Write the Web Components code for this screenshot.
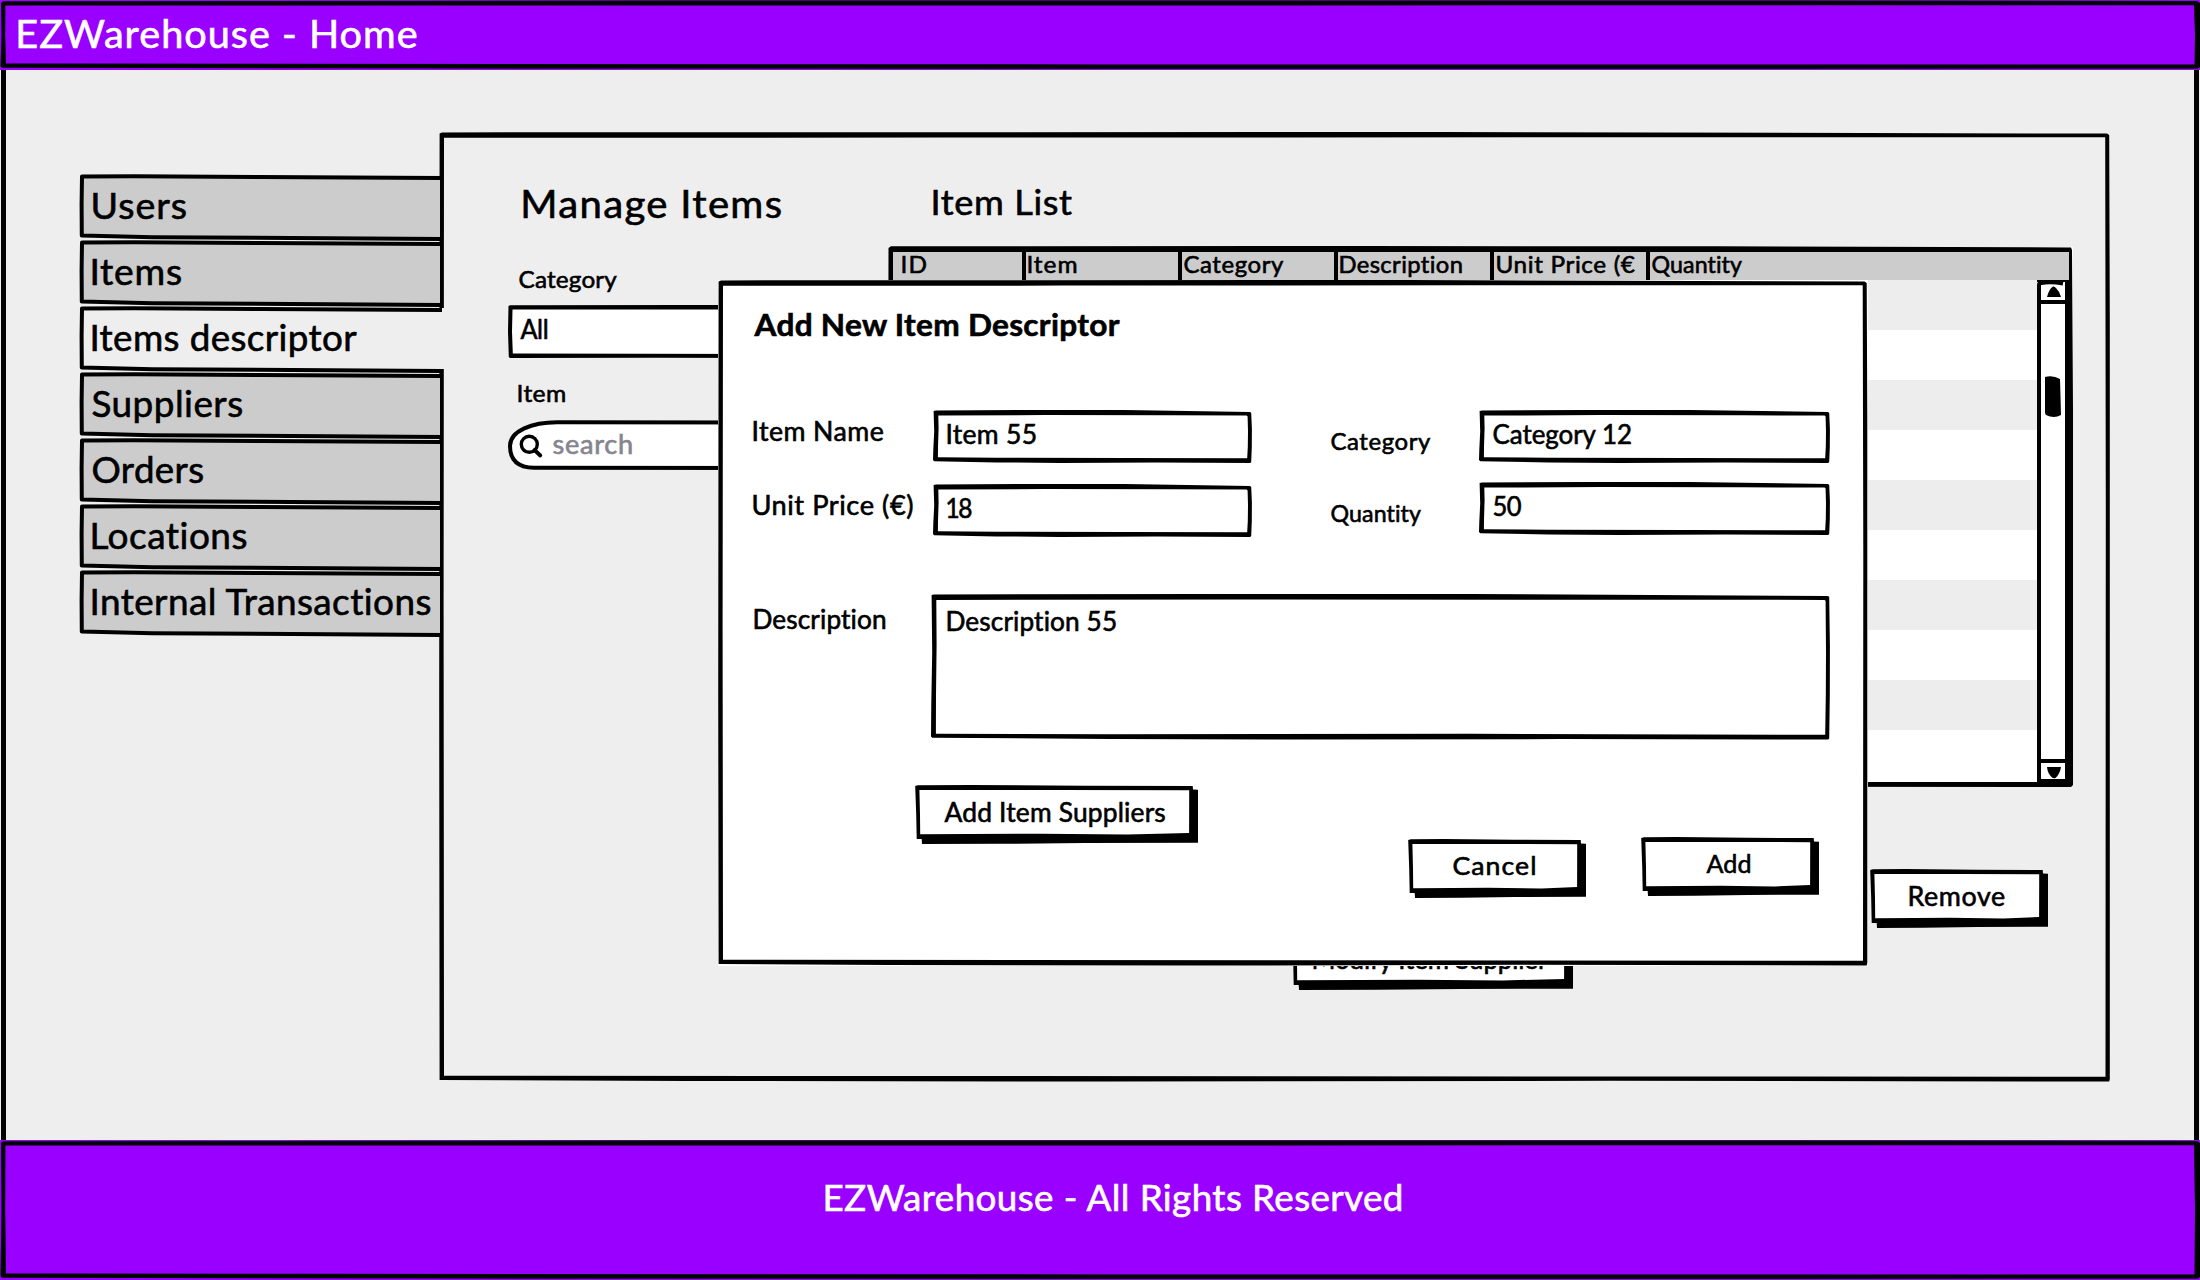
<!DOCTYPE html>
<html lang="en">
<head>
<meta charset="utf-8">
<title>EZWarehouse - Home</title>
<style>
  body { margin: 0; background: #eee; color: #000; font-family: Lato, "Open Sans", sans-serif; }
</style>
</head>
<body>
<ez-app></ez-app>
<script>
const pts = a => 'M' + a.map(p => p.map(n => n.toFixed(1)).join(' ')).join('L') + 'Z';

// Base class: a box with a hand-drawn outline behind its slotted content.
class Sketch extends HTMLElement {
  constructor() {
    super();
    this.attachShadow({ mode: 'open' }).innerHTML = `<style>
      :host{display:block;position:relative;box-sizing:border-box;flex:none}
      svg{position:absolute;left:0;top:0;width:100%;height:100%;overflow:visible;pointer-events:none}
      .in{position:relative;box-sizing:border-box;width:100%;height:100%}
      ${this.css || ''}</style><svg aria-hidden="true"></svg><div class="in"><slot></slot></div>`;
  }
  connectedCallback() {
    const r = this.getBoundingClientRect();
    this.shadowRoot.querySelector('svg').innerHTML = this.draw(r.width, r.height);
  }
}

// Single line of text whose ink is exactly "w" pixels wide: half of the
// difference to the natural width goes to tracking, the rest to glyph width.
customElements.define('ez-text', class extends HTMLElement {
  connectedCallback() {
    if (this.shadowRoot) return;
    const s = +this.getAttribute('s'), w = +this.getAttribute('w'), b = this.hasAttribute('bold');
    const t = this.textContent;
    const c = document.createElement('canvas').getContext('2d');
    c.font = `${b ? 'bold ' : ''}${s}px Lato`;
    const m = c.measureText(t);
    const left = m.actualBoundingBoxLeft, ink = left + m.actualBoundingBoxRight;
    const mid = (w + ink) / 2;
    const ls = (mid - ink) / (t.length - 1), k = w / mid;
    this.attachShadow({ mode: 'open' }).innerHTML = `<style>
      :host{display:block;flex:none;white-space:nowrap;width:${w}px;font-size:${s}px;line-height:${s + Math.round(s * .213)}px;
        font-weight:${b ? 700 : 400};font-variant-ligatures:none;letter-spacing:${ls.toFixed(3)}px;
        -webkit-text-stroke:.6px currentColor;paint-order:stroke}
      span{display:block;transform-origin:0 0;transform:translate(${(left * k + .5).toFixed(2)}px,.8px) scaleX(${k.toFixed(4)})}
      </style><span><slot></slot></span>`;
  }
});

customElements.define('ez-field', class extends Sketch {
  get css() { return `:host{height:53px}.in{padding:7px 0 0 14px}:host([area]) .in{padding:10px 0 0 16.5px}:host([plain]) .in{padding-left:12px}`; }
  draw(w, h) {
    if (this.hasAttribute('plain')) return `<path fill="#fff" d="${pts([[1,1],[w,0],[w,h],[1,h]])}"/>
      <path fill-rule="evenodd" d="${pts([[.5,1],[2,.3],[w*.6,0],[w,0],[w,h],[w*.5,h-.3],[2,h],[.8,h-1],[0,h*.5]])}${pts([[4.5,4.5],[w,4.5],[w,h-4],[4.8,h-4.5],[4,h*.5]])}"/>`;
    const a = this.hasAttribute('area');
    const o = [[.6,1],[3,.4],[w*.3,0],[w*.6,0],[w-2,1.9],[w-.8,3],[w-.1,h*.35],[w-.2,h*.7],[w-.8,h-1],[w-1.8,h+.1],[w*.7,h-.4],[w*.4,h],[w*.2,h-.6],[1.2,h-1.8],[0,h-3],[.3,h*.75],[1.2,h*.4]];
    const t = a ? 5.7 : 5.3;
    const i = [[5.3,t+.3],[w*.35,t-.2],[w*.75,t],[w-5.4,t+.2],[w-4.4,t+1.2],[w-4,h*.4],[w-4.2,h*.7],[w-4.8,h-4.7],[w*.6,h-(a?5.7:4.9)],[w*.2,h-5.2],[4.9,h-5.8],[5,h*.7],[5.6,h*.35]];
    return `<path fill="#fff" d="${pts(o)}"/><path fill-rule="evenodd" d="${pts(o)}${pts(i)}"/>`;
  }
});

customElements.define('ez-search', class extends Sketch {
  get css() { return `:host{height:50px;color:#868490}.in{padding:6.5px 0 0 44px}`; }
  draw(w, h) {
    return `<path d="M${w} 2.5L50 2.2C24 2 2 11 2 26C2 40 10 47.5 26 47.8L${w} 48" fill="#fff" stroke="#000" stroke-width="4"/>
      <circle cx="21.3" cy="24.3" r="8" fill="none" stroke="#000" stroke-width="3.4"/>
      <path d="M26.5 30L32.3 35.5" stroke="#000" stroke-width="3.8" stroke-linecap="round"/>`;
  }
});

customElements.define('ez-button', class extends Sketch {
  get css() { return `:host{height:59px}.in{padding:10.5px 5px 0 0;display:flex;justify-content:center}`; }
  draw(w, h) {
    return `<path d="${pts([[.2,1],[3,.2],[w*.2,0],[w*.6,.8],[w-5.3,1],[w-5,4.6],[w,4.8],[w,h-1.3],[w*.6,h-1],[w*.3,h-.2],[7,h],[6.7,h-5],[1.7,h-5],[1.2,h*.5]])}"/>
      <path fill="#fff" d="${pts([[4.4,5],[w*.5,4.9],[w-8.8,5.2],[w-8.9,h-11],[w*.75,h-9.6],[w*.45,h-10.3],[5.2,h-9.8],[5,h*.5]])}"/>`;
  }
});

customElements.define('ez-tab', class extends Sketch {
  get css() { return `:host{height:66px}.in{padding:8px 0 0 11.5px}`; }
  draw(w, h) {
    const on = this.hasAttribute('selected'), f = on ? '#eee' : '#ccc';
    return (on ? `<path fill="#eee" d="M${w-6} 2H${w+4}V63H${w-6}Z"/>` : '') +
      `<path fill="${f}" d="${pts([[2,2],[w-2,4],[w-2,64],[2,62]])}"/>
      <path fill="none" stroke="#000" stroke-width="4" stroke-linejoin="round" d="M${w} 4L${w*.5} 3L${w*.15} 2.3L2 2.6L1.6 30L1.8 61.5L${w*.2} 63.2L${w} 65"/>`;
  }
});

customElements.define('ez-panel', class extends Sketch {
  draw(w, h) {
    return `<path fill="${this.getAttribute('fill')}" d="M0 0H${w}V${h}H0Z"/>
      <path fill-rule="evenodd" d="${pts([[.6,1.5],[3,.4],[w*.25,.2],[w*.6,0],[w-3,1.6],[w-.8,3],[w-.2,h*.2],[w-.2,h-3],[w-.8,h-.5],[w*.7,h-1.2],[w*.4,h-.4],[w*.15,h-1],[.6,h-2],[.2,h*.6]])}${pts([[5,5.8],[w*.3,5.6],[w*.65,5.3],[w-4.8,5.2],[w-4.2,h*.4],[w-4.5,h-5.2],[w*.5,h-5.8],[5,h-6.3],[4.6,h*.5]])}"/>`;
  }
});

// Header and footer bars
customElements.define('ez-bar', class extends Sketch {
  get css() { return `:host{color:#fff}.in{display:flex;align-items:flex-start}
    :host([top]) .in{padding:9px 0 0 18px}:host([foot]) .in{padding:34px 0 0 825px}`; }
  draw(w, h) {
    return `<path fill="#90f" d="M0 0H${w}V${h}H0Z"/>
      <path fill-rule="evenodd" d="${pts([[1,3],[3,1.2],[w*.3,.6],[w*.7,.4],[w-3,1],[w,3],[w,h-3],[w-2,h-1.2],[w*.5,h-1],[w*.2,h-1.4],[2,h-2.2],[.5,h-4],[1.5,h*.5]])}${pts([[5.4,5.6],[w*.4,5.5],[w-6,5.2],[w-5,h*.5],[w-5.5,h-5.6],[w*.5,h-5.6],[6,h-6.4],[5.2,h*.5]])}"/>`;
  }
});

customElements.define('ez-scrollbar', class extends HTMLElement {
  connectedCallback() {
    this.attachShadow({ mode: 'open' }).innerHTML = `<style>:host{display:block;width:28px;height:502px;flex:none}svg{display:block}</style>
    <svg width="28" height="502" viewBox="0 0 28 502"><path fill="#fff" d="M0 2H28V502H0Z"/>
      <path d="M2 502V5Q2 3 4 3Q14 1.5 26 3.5" fill="none" stroke="#000" stroke-width="4"/>
      <path d="M2 22H28M2 481H28M2 501H28" stroke="#000" stroke-width="4"/>
      <path d="M10 17Q12 9 16 6.5Q17.500 6 19 8Q23 12 24 17Z"/>
      <path d="M10 487H24Q23 494 18.500 498Q16.500 499 14.500 497Q10.500 493 10 487Z"/>
      <path d="M8 97Q16 95 23 99L24 135Q17 139 9 135Q8 134 8 132Z"/></svg>`;
  }
});

customElements.define('ez-table', class extends Sketch {
  constructor() {
    super();
    this.shadowRoot.querySelector('.in').innerHTML = `
      <div class="head"><div style="width:129px;padding-left:9px"><ez-text s="23" w="24">ID</ez-text></div>
        <div><ez-text s="23" w="48">Item</ez-text></div>
        <div><ez-text s="23" w="99">Category</ez-text></div>
        <div><ez-text s="23" w="122">Description</ez-text></div>
        <div><ez-text s="23" w="138">Unit Price (€</ez-text></div>
        <div style="flex:1"><ez-text s="23" w="90">Quantity</ez-text></div></div>
      <div class="body"><div class="rows">${'<i></i>'.repeat(10)}</div><ez-scrollbar></ez-scrollbar></div>`;
  }
  get css() { return `:host{width:1185px;height:541px}
    .in{padding:5.500px 8px 5px 4.500px;display:flex;flex-direction:column}
    .head{display:flex;height:28.500px;flex:none;background:#ccc;margin-right:-4px}
    .head div{box-sizing:border-box;width:156px;border-left:4px solid #000;padding-left:2.500px}
    .head div:first-child{border:0}.head ez-text{margin-top:-3px}
    .body{display:flex;flex:1;min-height:0}.rows{flex:1;display:flex;flex-direction:column;background:#fff}
    i{height:50px;flex:none;background:#fff}i:nth-child(odd){background:#ededed}`; }
  draw(w, h) {
    return `<path fill="#fff" d="M2 1H${w}V${h-2}H2Z"/><path d="${pts([[.5,2],[3,.2],[w*.4,0],[w*.7,.3],[w-2,1.5],[w-1,4],[w,h*.3],[w,h-2],[w-2,h],[w*.5,h-.5],[1,h-1],[0,h*.5]])}"/>`;
  }
});

customElements.define('ez-dialog', class extends HTMLElement {
  connectedCallback() {
    this.attachShadow({ mode: 'open' }).innerHTML = `<style>
      :host{display:block;width:1149.500px;height:686px;background:#fff}
      ez-panel{width:100%;height:100%}
      .c{display:flex;flex-direction:column;padding:24px 0 0 35px}
      .row{display:flex;align-items:flex-start}
      .col{display:flex;flex-direction:column;flex:none;box-sizing:border-box}
    </style>
    <ez-panel fill="#fff"><div class="c">
      <ez-text s="31" w="367" bold>Add New Item Descriptor</ez-text>
      <div class="row" style="margin-top:68px;height:127px">
        <div class="col" style="width:179.5px;padding-top:4px;gap:42px"><ez-text s="26" w="129.5">Item Name</ez-text><ez-text s="26" w="159">Unit Price (€)</ez-text></div>
        <div class="col" style="width:319px;gap:21px"><ez-field><ez-text s="26" w="88.5">Item 55</ez-text></ez-field><ez-field><ez-text s="26" w="24">18</ez-text></ez-field></div>
        <div class="col" style="width:227px;padding:16px 0 0 79px;gap:44px"><ez-text s="23" w="99">Category</ez-text><ez-text s="23" w="90">Quantity</ez-text></div>
        <div class="col" style="width:351px;gap:19px"><ez-field><ez-text s="26" w="138">Category 12</ez-text></ez-field><ez-field><ez-text s="26" w="28">50</ez-text></ez-field></div>
      </div>
      <div class="row" style="margin-top:57px">
        <div class="col" style="width:177.5px;padding:8px 0 0 1px"><ez-text s="26" w="131">Description</ez-text></div>
        <ez-field area style="width:899px;height:145.5px"><ez-text s="26" w="169">Description 55</ez-text></ez-field>
      </div>
      <div class="row" style="margin-top:45px;padding-left:162px">
        <ez-button style="width:283px"><ez-text s="26" w="221">Add Item Suppliers</ez-text></ez-button>
        <ez-button style="width:178px;margin:54px 0 0 209.5px"><ez-text s="25" w="82">Cancel</ez-text></ez-button>
        <ez-button style="width:178px;margin:52px 0 0 55.5px"><ez-text s="25" w="44">Add</ez-text></ez-button>
      </div>
    </div></ez-panel>`;
  }
});

customElements.define('ez-app', class extends HTMLElement {
  connectedCallback() {
    this.attachShadow({ mode: 'open' }).innerHTML = `<style>
      :host{display:flex;flex-direction:column;position:relative;width:2200px;height:1280px;overflow:hidden}
      main{display:flex;align-items:flex-start;height:1070px;box-sizing:border-box;margin:0 1px;padding:62px 0 0 74px;border:solid #000;border-width:0 5px}
      nav{width:362px;flex:none;position:relative;z-index:1;margin-top:42px}
      .panel{width:1671px;height:950px;margin-left:-3.500px}
      .cols{display:flex;padding-top:47px}
      .left{width:449.5px;box-sizing:border-box;padding-left:69px;flex:none}
      .right{flex:none;width:1185px;display:flex;flex-direction:column}
      ez-dialog{position:absolute;left:718px;top:280px;z-index:2}
    </style>
    <ez-bar top style="height:70px"><ez-text s="38" w="398">EZWarehouse - Home</ez-text></ez-bar>
    <main>
      <nav>
        <ez-tab><ez-text s="36" w="94">Users</ez-text></ez-tab>
        <ez-tab><ez-text s="36" w="89">Items</ez-text></ez-tab>
        <ez-tab selected><ez-text s="36" w="264">Items descriptor</ez-text></ez-tab>
        <ez-tab><ez-text s="36" w="150">Suppliers</ez-text></ez-tab>
        <ez-tab><ez-text s="36" w="111">Orders</ez-text></ez-tab>
        <ez-tab><ez-text s="36" w="155">Locations</ez-text></ez-tab>
        <ez-tab><ez-text s="36" w="340">Internal Transactions</ez-text></ez-tab>
      </nav>
      <ez-panel class="panel" fill="#eee"><div class="cols">
        <div class="left">
          <ez-text s="38" w="257" style="margin-left:15px">Manage Items</ez-text>
          <ez-text s="24" w="98" style="margin:38px 0 13px 11px">Category</ez-text>
          <ez-field plain style="width:300px"><ez-text s="26" w="27">All</ez-text></ez-field>
          <ez-text s="24" w="47" style="margin:19px 0 14px 10.5px">Item</ez-text>
          <ez-search style="width:300px"><ez-text s="26" w="79">search</ez-text></ez-search>
        </div>
        <div class="right">
          <ez-text s="35" w="139" style="margin:0 0 25px 45px">Item List</ez-text>
          <ez-table></ez-table>
          <ez-button style="width:178px;margin:81.5px 25.5px 3.5px 0;align-self:flex-end"><ez-text s="26" w="95">Remove</ez-text></ez-button>
          <ez-button style="width:281px;margin-left:404px"><ez-text s="26" w="235">Modify Item Supplier</ez-text></ez-button>
        </div>
      </div></ez-panel>
    </main>
    <ez-bar foot style="height:140px"><ez-text s="36" w="577">EZWarehouse - All Rights Reserved</ez-text></ez-bar>
    <ez-dialog></ez-dialog>`;
  }
});
</script>
</body>
</html>
